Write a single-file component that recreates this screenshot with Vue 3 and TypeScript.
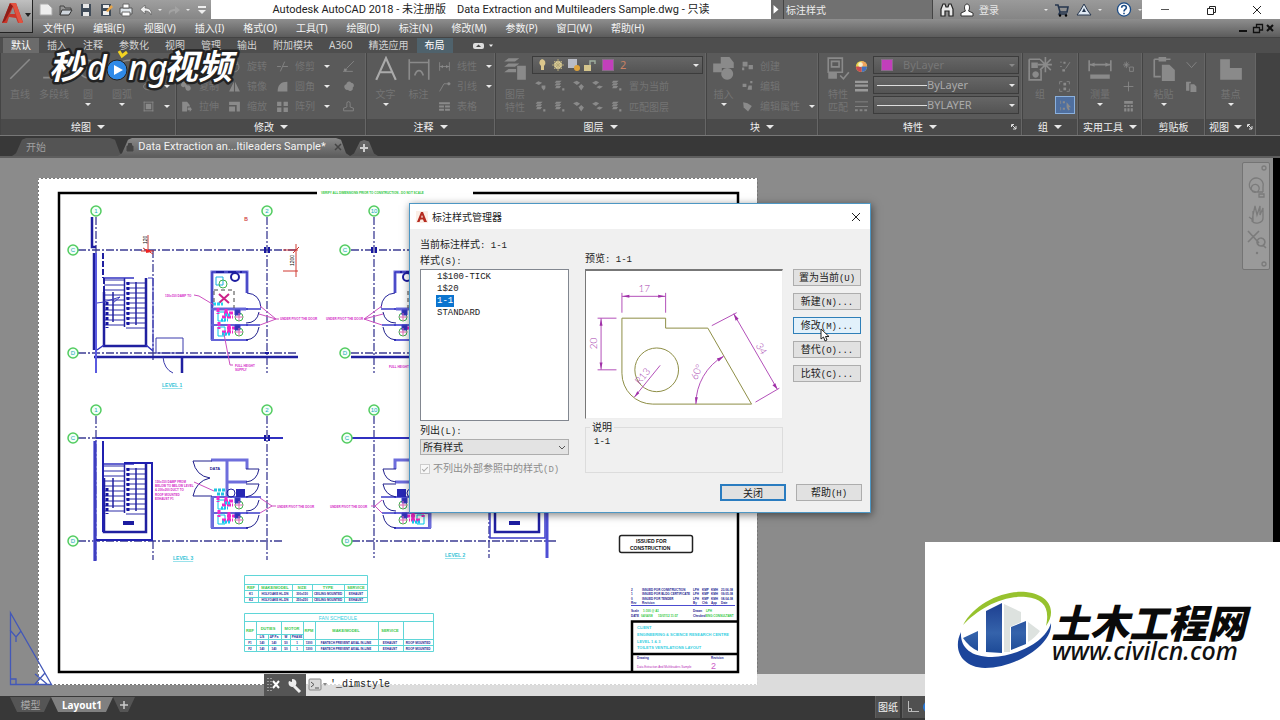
<script setup lang="ts">
import { ref } from 'vue'

interface Icon { s?: string; f?: string }
interface Tool { icon: string; label?: string; arrow?: boolean; on?: boolean }
interface Big { icon: string; lines: string[]; arrow?: boolean }
interface Panel {
  key: string
  title: string
  menu?: boolean
  launcher?: boolean
  bigs: Big[]
  cols: Tool[][]
}

const icons: Record<string, Icon> = {
  line: { s: 'M3 21L21 3' },
  pline: { s: 'M2 20H10L20 4' },
  circle: { s: 'M12 4a8 8 0 1 0 .1 0M12 12h7' },
  arc: { s: 'M3 20C5 8 12 3 21 4' },
  rect: { s: 'M4 6H20V18H4Z' },
  ellipse: { s: 'M12 6c12 0 12 12 0 12s-12-12 0-12' },
  hatch: { s: 'M3 4H21M3 20H21M4 3V21M20 3V21', f: 'M7 7h10v10H7z' },
  move: { s: 'M12 3V21M3 12H21M9 6l3-3 3 3M9 18l3 3 3-3' },
  copy: { f: 'M3 6a4 4 0 1 1 8 2l3 2a5 5 0 1 1-3 8l-2-6a4 4 0 0 1-6-6z' },
  stretch: { f: 'M4 3h9l5 6v3h-5v9H4zM14 14h4v-2l4 5-4 5v-3h-4z' },
  rotate: { s: 'M7 5a9 9 0 1 0 11 2M18 3v5h-5' },
  mirror: { f: 'M11 3v18H2zM13 3l9 18h-9z' },
  scale: { f: 'M2 3h20v18h-6V9H2zM2 12h11v9H2z' },
  trim: { s: 'M2 12H9M13 12H22M8 21L16 3' },
  fillet: { f: 'M3 21C3 9 9 3 21 3v18z' },
  array: { f: 'M2 3h8v8H2zM14 3h8v8h-8zM2 14h8v8H2zM14 14h8v8h-8z' },
  erase: { s: 'M8 16L22 2M2 21H20', f: 'M5 15l5 3-4 3-3-2z' },
  explode: { f: 'M8 8a5 5 0 0 1 9-3 5 5 0 0 1 3 9 5 5 0 0 1-9 4 5 5 0 1 1-3-10z' },
  offset: { s: 'M3 20H21V15L15 13V6a3 3 0 0 0-6 0V13L3 15Z' },
  text: { s: 'M3 22L12 2L21 22M6.500 15H17.500' },
  dim: { s: 'M3 3V22M21 3V22M3 6H21M8 18c2-6 6-6 8 0' },
  linear: { s: 'M3 4V20M21 4V20M3 12H21', f: 'M4 12l5-3v6zM20 12l-5-3v6z' },
  leader: { s: 'M3 21L11 7H17', f: 'M20 4a3 3 0 1 1-.1 0z' },
  table: { f: 'M2 4h20v4H2zM2 10h9v4H2zM13 10h9v4h-9zM2 16h9v4H2zM13 16h9v4h-9z' },
  layers: { f: 'M6 2h10l-4 3H2zM6 7h10l-4 3H2zM6 12h7v3H2zM14 9h8v13h-8z' },
  layer1: { f: 'M2 8l6-4 7 3-6 4zM14 12h7v5l-3 4-4-5z' },
  layer2: { f: 'M6 3h10l-4 4H3zM6 8h9l-3 4H3zM6 13h9l-3 4H4zM17 17h4v4h-4z' },
  layer3: { f: 'M2 6l7-3 6 4-6 4zM12 14l5-5 5 5-5 7z' },
  layer4: { f: 'M2 7l7-4 6 3-6 5zM10 15l5-3 7 2-6 4z' },
  insert: { f: 'M9 1h8l4 5v5H9zM2 7h8v8H2zM15 11a5.500 5.500 0 1 1-.1 0z' },
  create: { f: 'M3 3h9v9H3zM14 9h8v8h-8zM2 14h4v5H2z' },
  editb: { f: 'M3 7h7v6H3zM14 10h6v8h-8zM17 2h4v4h-4z' },
  attr: { f: 'M4 4l8 2 8 5-7 10L5 14z' },
  match: { s: 'M3 2H16V15H3ZM6 5H13V10H6ZM14 18l3 3 5-6', f: 'M3 15h8v6H3z' },
  group: { s: 'M2 3H12M2 3V22H13V13M17 1V15M10 8H23M12 3l10 10M22 3L12 13', f: 'M4 6h6v5H4zM8 14a3 3 0 1 1-.1 0z' },
  ungroup: { s: 'M4 4h3M14 16L22 4M4 12h3', f: 'M8 17h5v4H8zM10 3h4v4h-4z' },
  gedit: { s: 'M3 3h5M16 3h5M3 21h5M16 21h5M3 3v5M21 3v5M3 16v5M21 16v5', f: 'M10 5h5v5h-5zM10 14h5v5h-5z' },
  gsel: { s: 'M3 3v6M3 15v6', f: 'M7 4h4v4H7zM7 16h4v4H7zM14 6l8 9h-4l2 5-3 1-3-6z' },
  measure: { s: 'M2 4V14M22 4V14M2 8H22', f: 'M3 17h18v4H3zM3 8l4-2v4zM21 8l-4-2v4z' },
  qselect: { s: 'M8 3v12M2 9h12M4 5l8 8M12 5l-8 8M14 13h7v8h-7z' },
  point: { s: 'M12 3V21M3 12H21' },
  calc: { f: 'M4 2h16v5H4zM4 9h4v4H4zM10 9h4v4h-4zM16 9h4v4h-4zM4 15h4v6H4zM10 15h4v6h-4zM16 15h4v6h-4z' },
  paste: { s: 'M3 3H18M3 3V19H9', f: 'M7 1h7v4H7zM10 8h7l5 5v10H10z' },
  cut: { s: 'M3 4L12 14L21 4' },
  copyclip: { f: 'M2 3h9v3H8v14H2zM10 8h7l4 4v10H10z' },
  base: { f: 'M2 3h9v8h11v11H2z' },
}

const panels: Panel[] = [
  {
    key: 'draw', title: '绘图', menu: true,
    bigs: [
      { icon: 'line', lines: ['直线'] }, { icon: 'pline', lines: ['多段线'] },
      { icon: 'circle', lines: ['圆'], arrow: true }, { icon: 'arc', lines: ['圆弧'], arrow: true },
    ],
    cols: [[{ icon: 'rect', arrow: true }, { icon: 'ellipse', arrow: true }, { icon: 'hatch', arrow: true }]],
  },
  {
    key: 'modify', title: '修改', menu: true, bigs: [],
    cols: [
      [{ icon: 'move' }, { icon: 'copy', label: '复制' }, { icon: 'stretch', label: '拉伸' }],
      [{ icon: 'rotate', label: '旋转' }, { icon: 'mirror', label: '镜像' }, { icon: 'scale', label: '缩放' }],
      [{ icon: 'trim', label: '修剪', arrow: true }, { icon: 'fillet', label: '圆角', arrow: true }, { icon: 'array', label: '阵列', arrow: true }],
      [{ icon: 'erase' }, { icon: 'explode' }, { icon: 'offset' }],
    ],
  },
  {
    key: 'annot', title: '注释', menu: true,
    bigs: [{ icon: 'text', lines: ['文字'], arrow: true }, { icon: 'dim', lines: ['标注'] }],
    cols: [[{ icon: 'linear', label: '线性', arrow: true }, { icon: 'leader', label: '引线', arrow: true }, { icon: 'table', label: '表格' }]],
  },
  { key: 'layer', title: '图层', menu: true, bigs: [{ icon: 'layers', lines: ['图层', '特性'] }], cols: [] },
  {
    key: 'block', title: '块', menu: true,
    bigs: [{ icon: 'insert', lines: ['插入'], arrow: true }],
    cols: [[{ icon: 'create', label: '创建' }, { icon: 'editb', label: '编辑' }, { icon: 'attr', label: '编辑属性', arrow: true }]],
  },
  { key: 'props', title: '特性', menu: true, launcher: true, bigs: [{ icon: 'match', lines: ['特性', '匹配'] }], cols: [] },
  {
    key: 'group', title: '组', menu: true,
    bigs: [{ icon: 'group', lines: ['组'] }],
    cols: [[{ icon: 'ungroup' }, { icon: 'gedit' }, { icon: 'gsel', on: true }]],
  },
  {
    key: 'util', title: '实用工具', menu: true,
    bigs: [{ icon: 'measure', lines: ['测量'], arrow: true }],
    cols: [[{ icon: 'qselect' }, { icon: 'point' }, { icon: 'calc' }]],
  },
  {
    key: 'clip', title: '剪贴板',
    bigs: [{ icon: 'paste', lines: ['粘贴'], arrow: true }],
    cols: [[{ icon: 'cut' }, { icon: 'copyclip' }]],
  },
  { key: 'view', title: '视图', menu: true, launcher: true, bigs: [{ icon: 'base', lines: ['基点'], arrow: true }], cols: [] },
]

const layerRows = [
  { icons: ['layer1', 'layer2', 'layer3', 'layer4', 'layer2'], label: '置为当前' },
  { icons: ['layer2', 'layer2', 'layer3', 'layer4', 'layer2'], label: '匹配图层' },
]

const menus = ['文件(F)', '编辑(E)', '视图(V)', '插入(I)', '格式(O)', '工具(T)', '绘图(D)', '标注(N)', '修改(M)', '参数(P)', '窗口(W)', '帮助(H)']
const tabs = ['默认', '插入', '注释', '参数化', '视图', '管理', '输出', '附加模块', 'A360', '精选应用', '布局']

const styles = ['1$100-TICK', '1$20', '1-1', 'STANDARD']
const current = ref('1-1')
const actions = [
  { t: '置为当前', k: '(U)' }, { t: '新建', k: '(N)...' }, { t: '修改', k: '(M)...', hot: true },
  { t: '替代', k: '(O)...' }, { t: '比较', k: '(C)...' },
]

const bubbles = [
  [96, 211, '1'], [267, 211, '2'], [374, 211, '10'], [73, 250, 'C'], [73, 353, 'D'], [345, 250, 'C'], [345, 353, 'D'],
  [96, 410, '1'], [267, 410, '2'], [374, 410, '10'], [73, 438, 'C'], [73, 541, 'D'], [347, 438, 'C'], [347, 541, 'D'],
] as [number, number, string][]

const treads = Array.from({ length: 10 }, (_, i) => i * 5)

const cells = [
  [251, 589, 'REF', 'g'], [275, 589, 'MAKE/MODEL', 'g'], [302, 589, 'SIZE', 'g'], [328, 589, 'TYPE', 'g'], [356, 589, 'SERVICE', 'g'],
  [251, 595, 'K1', 'n'], [275, 595, 'HOLYOAKE HL-DN', 'n'], [302, 595, '300x150', 'n'], [328, 595, 'CEILING MOUNTED', 'n'], [356, 595, 'EXHAUST', 'n'],
  [251, 601, 'K2', 'n'], [275, 601, 'HOLYOAKE HL-DN', 'n'], [302, 601, '250x250', 'n'], [328, 601, 'CEILING MOUNTED', 'n'], [356, 601, 'EXHAUST', 'n'],
  [250, 632, 'REF', 'g'], [268, 630, 'DUTIES', 'g'], [292, 630, 'MOTOR', 'g'], [309, 632, 'RPM', 'g'], [346, 632, 'MAKE/MODEL', 'g'], [390, 632, 'SERVICE', 'g'],
  [262, 638, 'L/S', 'n'], [274, 638, 'ΔP Pa', 'n'], [286, 638, 'W', 'n'], [297, 638, 'PHASE', 'n'],
  [250, 644, 'F1', 'n'], [262, 644, '140', 'n'], [274, 644, '140', 'n'], [286, 644, '50', 'n'], [297, 644, '1', 'n'], [309, 644, '1300', 'n'],
  [346, 644, 'FANTECH PREVENT AXIAL IN-LINE', 'n'], [390, 644, 'EXHAUST', 'n'], [418, 644, 'ROOF MOUNTED', 'n'],
  [250, 650, 'F2', 'n'], [262, 650, '140', 'n'], [274, 650, '140', 'n'], [286, 650, '50', 'n'], [297, 650, '1', 'n'], [309, 650, '1300', 'n'],
  [346, 650, 'FANTECH PREVENT AXIAL IN-LINE', 'n'], [390, 650, 'EXHAUST', 'n'], [418, 650, 'ROOF MOUNTED', 'n'],
] as [number, number, string, string][]

const revisions = [
  { y: 591, v: ['2', 'ISSUED FOR CONSTRUCTION', 'LPH', 'KMP', 'KMH', '23-06-08'] },
  { y: 595, v: ['1', 'ISSUED FOR BLDG CERTIFICATE', 'LPH', 'KMP', 'KMH', '09-05-08'] },
  { y: 600, v: ['0', 'ISSUED FOR TENDER', 'LPH', 'KMP', 'KMH', '08-04-08'] },
  { y: 604, v: ['Rev', 'Revision', 'By', 'Chk', 'App', 'Date'] },
]
const revisionX = [631, 642, 693, 702, 711, 721]
</script>

<template>
  <div class="app">
    <header class="head">
      <button class="appbtn" aria-label="应用程序菜单">
        <svg width="33" height="32" viewBox="0 0 33 32">
          <path d="M2 23L10 3H16L23 22L18 23L16 18L9 17L7 23Z" fill="#c9362a" />
          <path d="M10 14L13 7L15 14Z" fill="#8f8f8f" />
          <path d="M10 3L2 23L5 21L13 6Z" fill="#8f1d18" />
          <path d="M13 6L19 23H23L16 3H10Z" fill="#e2523f" />
          <path d="M25 13H31L28 17Z" fill="#222" />
        </svg>
      </button>
      <div class="headmain">
        <div class="titlebar">
          <div class="quick">
            <button aria-label="新建"><svg viewBox="0 0 14 14"><path d="M1 1H9L13 5V12H1Z" fill="#eee" stroke="#aaa" /></svg></button>
            <button aria-label="打开"><svg viewBox="0 0 14 14"><path d="M1 12V3H5L6 5H12V7" fill="none" stroke="#444" /><path d="M3 7H13L10 12H1Z" fill="#cfd6dd" stroke="#333" /></svg></button>
            <button aria-label="保存"><svg viewBox="0 0 14 14"><path d="M2 1H12V13H2Z" fill="#3f4b58" /><path d="M4 1H10V5H4ZM4 9H10V13H4Z" fill="#e8e8e8" /></svg></button>
            <button aria-label="另存为"><svg viewBox="0 0 14 14"><path d="M2 1H12V13H2Z" fill="#3f4b58" /><path d="M4 2H10V5H4ZM4 8H10V12H4Z" fill="#eee" /><path d="M7 8L12 2L14 4L9 9Z" fill="#e9a648" /></svg></button>
            <button aria-label="打印"><svg viewBox="0 0 14 14"><path d="M1 5H13V11H1Z" fill="#dfe5ea" stroke="#555" /><path d="M4 1H10V5H4ZM3 9H11V13H3Z" fill="#fff" stroke="#666" /></svg></button>
            <button aria-label="放弃"><svg viewBox="0 0 14 14"><path d="M6 2V5C11 5 13 8 12 12C11 9 9 8 6 8V11L1 6.500Z" fill="#eee" stroke="#555" stroke-width=".6" /></svg></button>
            <i class="dn sm"></i>
            <button aria-label="重做"><svg viewBox="0 0 14 14"><path d="M8 3V6C3 6 1 8 2 12C3 9 5 8 8 8V11L13 7Z" fill="#a3a3a3" /></svg></button>
            <i class="dn sm"></i>
            <button class="nar" aria-label="自定义"><svg viewBox="0 0 14 14"><path d="M3 3H11V5H3ZM3 7H11L7 11Z" fill="#eee" /></svg></button>
          </div>
          <div class="doctitle"><span>Autodesk AutoCAD 2018 - 未注册版</span><span>Data Extraction and Multileaders Sample.dwg - 只读</span></div>
          <div class="info">
            <button class="exp" aria-label="展开"><svg width="8" height="10" viewBox="0 0 8 10"><path d="M2 1V8L6 4.500Z" fill="#fff" /></svg></button>
            <input class="search" aria-label="搜索" value="标注样式">
            <button aria-label="查找"><svg viewBox="0 0 16 14"><path d="M2 13V6L4 1H6L7 4H9L10 1H12L14 6V13H10V8H6V13Z" fill="#e8e8e8" stroke="#222" stroke-width="1.200" /></svg></button>
            <button class="login"><svg viewBox="0 0 16 14"><path d="M8 1C11 1 11 6 9.500 8L14 10V13H2V10L6.500 8C5 6 5 1 8 1Z" fill="#fff" stroke="#333" /></svg>登录</button>
            <i class="dn sm"></i>
            <button aria-label="商店"><svg viewBox="0 0 16 14"><path d="M1 2H4L6 9H13L14 4H5M6 9L5 11H13" fill="none" stroke="#26364e" stroke-width="1.600" /><circle cx="6" cy="12.500" r="1.200" /><circle cx="12" cy="12.500" r="1.200" /></svg></button>
            <button aria-label="应用"><svg viewBox="0 0 16 14"><path d="M8 1L12 8L15 12H1L4 8Z" fill="#dfe8f2" stroke="#26364e" /><path d="M8 5L10 9H6Z" fill="#26364e" /></svg></button>
            <i class="dn sm"></i>
            <button class="help" aria-label="帮助"><svg viewBox="0 0 16 16"><circle cx="8" cy="8" r="7" fill="#fff" stroke="#1c4c86" stroke-width="1.400" /><path d="M5.500 6C5.500 3 10.500 3 10.500 6C10.500 8 8 7.800 8 10M8 11.500V13" fill="none" stroke="#1c4c86" stroke-width="1.700" /></svg></button>
            <i class="dn sm"></i>
          </div>
          <div class="win">
            <button aria-label="最小化"><svg viewBox="0 0 12 12"><path d="M2 5.500H10" stroke="#555" /></svg></button>
            <button aria-label="还原"><svg viewBox="0 0 12 12"><path d="M2.500 4.500H8.500V10.500H2.500ZM4.500 4V2.500H10.500V8.500H9" fill="none" stroke="#222" /></svg></button>
            <button aria-label="关闭窗口"><svg viewBox="0 0 12 12"><path d="M2 2L10 10M10 2L2 10" stroke="#222" /></svg></button>
          </div>
        </div>
        <nav class="menubar">
          <button v-for="m in menus" :key="m">{{ m }}</button>
          <svg class="mdi" width="38" height="12" viewBox="0 0 38 12"><path d="M1 9H9" stroke="#111" stroke-width="2" /><path d="M15.500 5.500H21.500V10.500H15.500ZM18.500 5V2.500H24.500V8H22" fill="none" stroke="#111" stroke-width="1.300" /><path d="M29 3L35 9M35 3L29 9" stroke="#111" stroke-width="2" /></svg>
        </nav>
      </div>
    </header>

    <nav class="tabs">
      <button v-for="(t, i) in tabs" :key="t" :class="{ active: i === 0, ctx: i === 10 }">{{ t }}</button>
      <button class="min" aria-label="最小化功能区"><svg width="22" height="8" viewBox="0 0 22 8"><rect x="0" y="1" width="11" height="6" rx="2" fill="#ddd" /><path d="M3 5H8L5.500 2.500Z" fill="#444" /><path d="M16 2.500H20L18 5Z" fill="#eee" /></svg></button>
    </nav>

    <section class="ribbon">
      <div v-for="p in panels" :key="p.key" class="panel" :class="p.key">
        <div class="pbody">
          <button v-for="b in p.bigs" :key="b.icon" class="big" :class="{ lit: b.icon === 'text' }">
            <svg viewBox="0 0 24 24"><path v-if="icons[b.icon].s" :d="icons[b.icon].s" class="st" /><path v-if="icons[b.icon].f" :d="icons[b.icon].f" class="fi" /></svg>
            <span v-for="l in b.lines" :key="l">{{ l }}</span>
            <i v-if="b.arrow" class="dn"></i>
          </button>
          <div v-for="(c, ci) in p.cols" :key="ci" class="col">
            <button v-for="t in c" :key="t.icon" class="tool" :class="{ on: t.on }" :aria-label="t.label || t.icon">
              <svg viewBox="0 0 24 24"><path v-if="icons[t.icon].s" :d="icons[t.icon].s" class="st" /><path v-if="icons[t.icon].f" :d="icons[t.icon].f" class="fi" /></svg>
              <span v-if="t.label">{{ t.label }}</span>
              <i v-if="t.arrow" class="dn"></i>
            </button>
          </div>

          <div v-if="p.key === 'layer'" class="stack">
            <div class="combo lay">
              <svg width="70" height="16" viewBox="0 0 70 16">
                <path d="M6 2a4 4 0 0 1 2 7v4H5V9a4 4 0 0 1 1-7z" fill="#dcc78c" />
                <circle cx="22" cy="8" r="4" fill="#dccf9a" /><path d="M22 2V14M16 8H28M18 4L26 12M26 4L18 12" stroke="#b5a878" />
                <path d="M32 2H41V11H32Z" fill="#b9bcc6" /><circle cx="41" cy="11" r="3" fill="#dfa33c" />
                <path d="M48 8H55V14H48Z" fill="#d5c58c" /><path d="M54 8V4H59V7" fill="none" stroke="#9fae9f" stroke-width="1.400" />
              </svg>
              <b class="sw"></b>
              <select class="red" aria-label="图层"><option>2</option></select><i class="dn"></i>
            </div>
            <div v-for="r in layerRows" :key="r.label" class="lrow">
              <button v-for="(n, i) in r.icons" :key="i" aria-label="图层工具"><svg viewBox="0 0 24 24"><path :d="icons[n].f" class="fi" /></svg></button>
              <span>{{ r.label }}</span>
            </div>
          </div>

          <template v-if="p.key === 'props'">
            <div class="picons">
              <svg viewBox="0 0 14 14"><circle cx="7" cy="7" r="6" fill="#e8d34a" /><path d="M7 7L7 1A6 6 0 0 1 13 7Z" fill="#f0a45c" /><path d="M7 7H13A6 6 0 0 1 7 13Z" fill="#4470c0" /><path d="M7 7V13A6 6 0 0 1 1 7Z" fill="#c84a52" /><circle cx="6" cy="5" r="2.500" fill="#fff" opacity=".7" /></svg>
              <svg viewBox="0 0 14 14"><path d="M0 2H14M0 6H14M0 11H14" stroke="#9a9a9a" stroke-width="2.500" /></svg>
              <svg viewBox="0 0 14 14"><path d="M0 2H14M0 7H14" stroke="#858585" /><path d="M0 11H14" stroke="#858585" stroke-width="2" stroke-dasharray="3 2" /></svg>
            </div>
            <div class="stack">
              <div class="combo off"><b class="sw"></b><select aria-label="颜色"><option>ByLayer</option></select><i class="dn"></i></div>
              <div class="combo"><u></u><select aria-label="线宽"><option>ByLayer</option></select><i class="dn"></i></div>
              <div class="combo"><u></u><select aria-label="线型"><option>BYLAYER</option></select><i class="dn"></i></div>
            </div>
          </template>
        </div>
        <div class="cap">{{ p.title }}<i v-if="p.menu" class="dn lg"></i><svg v-if="p.launcher" class="launch" width="6" height="6" viewBox="0 0 6 6"><path d="M1 1L5 5M5 2V5H2M0.500 3V0.500H3" fill="none" stroke="#ddd" /></svg></div>
      </div>

      <svg class="watermark" width="210" height="66" viewBox="40 36 210 66" role="img" aria-label="秒dong视频">
        <g class="wm">
          <text x="49" y="79" class="cjk">秒</text><text x="87" y="80">d</text><text x="128" y="80">ng</text><text x="164" y="79" class="cjk">视频</text>
        </g>
        <circle cx="117" cy="70" r="10" fill="#2f8ae8" stroke="#222" stroke-width="1" />
        <path d="M114 65V75L123 70Z" fill="#fff" />
        <path d="M119 51L122 56L127 52" fill="none" stroke="#f3d321" stroke-width="3" />
      </svg>
    </section>

    <nav class="files">
      <button class="ftab start">开始</button>
      <button class="ftab doc"><svg width="8" height="10" viewBox="0 0 8 10"><path d="M1 4H7V9H1ZM2.500 4V1.500H5.500V4" fill="#444" stroke="#444" /></svg><span>Data Extraction an...ltileaders Sample*</span><svg width="8" height="8" viewBox="0 0 8 8"><path d="M1 1L7 7M7 1L1 7" stroke="#444" stroke-width="1.500" /></svg></button>
      <button class="ftab plus" aria-label="新图形"><svg width="10" height="10" viewBox="0 0 10 10"><path d="M5 1V9M1 5H9" stroke="#ccc" stroke-width="2" /></svg></button>
    </nav>

    <main class="canvas">
      <svg class="sheet" width="925" height="538" viewBox="0 158 925 538">
        <defs>
          <g id="stalls" fill="none" stroke="#3c3cc8">
            <path d="M211 309H248M211 325H248M211 340H248M213 309V340" stroke-width="2" stroke="#6464d8" />
            <path d="M246 309h15M246 325h14M246 340h2" stroke-width="1.500" />
            <path d="M259 312Q257 323 246 323M259 327Q257 339 246 340" stroke="#20208c" />
            <path d="M218 312h7v9h-7zM218 327h7v9h-7z" stroke="#00c8e8" />
            <path d="M218 308v6M224 313h9M226 309v7M219 322v7M227 328h8M229 324v7M222 317h11M222 332h11" stroke="#f028c8" stroke-width="3" stroke-dasharray="4 1" />
            <path d="M221 320h7M222 334h9M225 315h6" stroke="#14c8f0" stroke-width="3" stroke-dasharray="2 1" />
            <circle cx="239" cy="317" r="4" stroke="#3cb44c" /><circle cx="239" cy="332" r="4" stroke="#3cb44c" />
            <path d="M235 310h5v5h-5zM235 325h5v5h-5z" fill="#3232b4" />
            <path d="M239 313v8M235 317h8M239 328v8M235 332h8" stroke="#e066b4" />
          </g>
          <g id="room1">
            <path d="M212 340V272H247V293M214 309H246" fill="none" stroke="#6e6edc" stroke-width="3" />
            <path d="M212 340V272H247V293" fill="none" stroke="#2828b4" stroke-width="1" />
            <path d="M247 293Q260 294 261 308" fill="none" stroke="#24249a" />
            <path d="M216 272H242" stroke="#1e1ea0" stroke-width="2" stroke-dasharray="8 4" />
            <circle cx="235" cy="277" r="4" fill="none" stroke="#1e1ea0" stroke-width="2" />
            <path d="M214 290H234V308M214 302V290" fill="none" stroke="#444" stroke-dasharray="4 3" />
            <path d="M216 277h7v8h-7z" fill="none" stroke="#18aee0" /><circle cx="223" cy="284" r="4" fill="none" stroke="#3cb44c" />
            <path d="M219 294L229 303M229 294L219 303" stroke="#cc2288" stroke-width="2" />
            <path d="M213 304h10" stroke="#20d4f0" stroke-width="3" stroke-dasharray="3 1" />
            <use href="#stalls" />
          </g>
          <g id="room2">
            <use href="#stalls" y="188" />
            <path d="M212 528V497M211 460H247V469M227 460V497M227 482H247" fill="none" stroke="#6e6edc" stroke-width="3" />
            <path d="M259 469Q257 481 246 482M246 469H259M246 484H259Q257 495 246 497" fill="none" stroke="#20208c" />
            <circle cx="231" cy="493" r="4" fill="none" stroke="#1e1ea0" /><path d="M236 489h9v8h-9z" fill="#2828b4" />
            <path d="M214 490h11M217 494h7" stroke="#20c4e0" stroke-width="3" stroke-dasharray="3 1" />
          </g>
        </defs>
        <rect x="38" y="178" width="719" height="507" fill="#fff" />
        <path d="M38.500 684V178.500H757.500V684.500H38" fill="none" stroke="#777" stroke-dasharray="2 2" />
        <path d="M317 193H59V672H738V193H473" fill="none" stroke="#000" stroke-width="2.500" />
        <text x="321" y="194" class="t3 green bd">VERIFY ALL DIMENSIONS PRIOR TO CONSTRUCTION - DO NOT SCALE</text>

        <g class="grid">
          <path d="M96 217V373M267 217V373M374 217V373M78 250H298M78 353H298M351 250H410M351 353H410M153 250V360" />
          <path d="M96 416V560M267 416V560M374 416V558M78 438H283M78 541H283M352 438H410M352 541H558M153 541V560M489 512V558" />
        </g>
        <path d="M94 357H298M351 357H410M94 253V350M92 217V247H96M182 357V373" fill="none" stroke="#2020a0" stroke-width="2.500" />
        <path d="M96 253V373" stroke="#5a5ae0" stroke-width="2" />
        <path d="M156 338H183V353M156 338V353H183M163 357Q164 369 173 373" fill="none" stroke="#3a3aac" />
        <path d="M96 438H283M352 438H410" stroke="#3030c0" stroke-width="2" />
        <path d="M95 441V561" stroke="#6262dc" stroke-width="3.500" />
        <path d="M95 441V561" stroke="#1c1ca0" />

        <g v-for="dy in [0, 186]" :key="dy" :transform="`translate(0 ${dy})`">
          <path v-for="t in treads" :key="t" :d="`M104 ${280 + t}H124M126 ${283 + t}H147`" stroke="#2c2ca8" />
          <path d="M107 302V328" stroke="#1414a0" stroke-width="3" stroke-dasharray="3 2" />
          <path d="M128 282V327" stroke="#1414a0" stroke-width="3" stroke-dasharray="3 2" />
          <path d="M124.500 278V327M136 282V325M113 292V322" stroke="#2020a0" stroke-width="1.500" />
          <path d="M104 292V346H146V278" fill="none" stroke="#2020a0" stroke-width="2.500" />
          <path d="M104 278H134" fill="none" stroke="#3232c0" stroke-width="1.500" />
        </g>
        <path d="M97 350L104 345M153 351L146 345" stroke="#3232c0" stroke-width="1.500" />
        <path d="M103 253V278M104 292V278" stroke="#2020a0" stroke-width="2" stroke-dasharray="6 2" />
        <path d="M97 303L104 302L120 297L113 303M148 278H153V350" fill="none" stroke="#4040c0" />
        <path d="M103 441V532M124 463H152V540H96" fill="none" stroke="#2020b0" stroke-width="2" />
        <rect x="123" y="521" width="11" height="4" fill="#1c1ca0" />

        <use href="#room1" /><use href="#room1" transform="translate(642 0) scale(-1 1)" />
        <use href="#room2" /><use href="#room2" transform="translate(642 0) scale(-1 1)" />
        <path d="M193 461H212M193 496H212M193 461Q196 476 210 478Q196 481 193 496" fill="none" stroke="#20208c" />
        <text x="215" y="470" class="t4 navy mid bd">DATA</text>
        <path d="M265 247v6M269 247v6M265 353h4M372 247v6M376 247v6M265 435v6M269 435v6" stroke="#1818a0" stroke-width="2" />

        <path d="M148 235V253M141 251H154M143 248L153 254M296 244V277M283 250H298M283 271H298M293 253L299 247" fill="none" stroke="#d03830" />
        <path d="M146 249L152 251L146 253Z" fill="#f02020" />
        <text transform="translate(147 244) rotate(-90)" class="t5">120</text>
        <text transform="translate(294 266) rotate(-90)" class="t5">1200</text>
        <text x="246" y="221" class="t5 redt mid">B</text>

        <g class="mag">
          <path d="M194 295L199 296L214 305M260 306L276 319L259 314M276 319L260 325M276 319H279M224 334L230 365H233M364 319L382 306M364 319L383 314M364 319L382 325" />
          <path d="M194 482L214 491M260 498L272 506H276M272 506L260 513M382 500L375 506H371M375 506L382 513" />
        </g>
        <text x="165" y="297" class="t3 m">150x150 DAMP TO</text>
        <text x="280" y="320" class="t3 m">UNDER PIVOT THE DOOR</text>
        <text x="326" y="320" class="t3 m">UNDER PIVOT THE DOOR</text>
        <text x="235" y="367" class="t3 m">FULL HEIGHT</text><text x="235" y="371" class="t3 m">SUPPLY</text>
        <text x="389" y="368" class="t3 m">FULL HEIGHT</text>
        <text x="277" y="508" class="t3 m">UNDER PIVOT THE DOOR</text>
        <text x="330" y="508" class="t3 m">UNDER PIVOT THE DOOR</text>
        <text class="t3 m"><tspan x="155" y="483">150x150 DAMP FROM</tspan><tspan x="155" y="487">BELOW TO BELOW LEVEL</tspan><tspan x="155" y="491">&amp; 200x200 DUCT TO</tspan><tspan x="155" y="496">ROOF MOUNTED</tspan><tspan x="155" y="500">EXHAUST F1</tspan></text>
        <text x="162" y="387" class="lvl">LEVEL 1</text><text x="173" y="560" class="lvl">LEVEL 3</text><text x="445" y="557" class="lvl">LEVEL 2</text>

        <g v-for="b in bubbles" :key="`${b[0]}-${b[1]}`"><circle :cx="b[0]" :cy="b[1]" r="5" fill="#f2fff6" stroke="#52cc60" stroke-width="1.500" /><text :x="b[0]" :y="b[1] + 2" class="bub">{{ b[2] }}</text></g>

        <path d="M495 512V532H539V512" fill="none" stroke="#2020a0" stroke-width="2.500" /><path d="M490 512V538H545V512" fill="none" stroke="#3c3cc8" stroke-width="1.500" />
        <path d="M547 512V558" stroke="#4e4ed4" stroke-width="3" /><rect x="509" y="521" width="11" height="4" fill="#1c1ca0" />

        <path d="M244.500 575.500H367.500V602.500H244.500ZM244 584.500H367M244 590.500H367M244 597.500H367M258.500 584V602M292.500 584V602M312.500 584V602M344.500 584V602" class="tb" />
        <path d="M244.500 613.500H433.500V651.500H244.500ZM244 621.500H433M256 634.500H303M244 639.500H433M244 645.500H433M256.500 621V651M281.500 621V651M303.500 621V651M315.500 621V651M378.500 621V651M403.500 621V651M268.500 634V651M290.500 634V651" class="tb" />
        <text x="338" y="620" class="t5 cy mid">FAN SCHEDULE</text>
        <text v-for="(c, i) in cells" :key="i" :x="c[0]" :y="c[1]" class="mid" :class="c[3] === 'g' ? 'hd' : 't3 navy bd'">{{ c[2] }}</text>

        <rect x="619.500" y="535.500" width="73" height="17" rx="2" fill="none" stroke="#222" stroke-width="1.500" />
        <text x="636" y="543" class="stamp">ISSUED FOR</text><text x="630" y="550" class="stamp">CONSTRUCTION</text>

        <g v-for="r in revisions" :key="r.y" class="t3 navy bd"><text v-for="(s, i) in r.v" :key="i" :x="revisionX[i]" :y="r.y">{{ s }}</text></g>
        <g class="t3 navy bd">
          <text x="631" y="612">Scale</text><text x="693" y="612">Drawn</text><text x="631" y="617">DATE</text><text x="693" y="617">Checked</text>
          <text x="637" y="659">Drawing</text><text x="711" y="659">Revision</text>
        </g>
        <path d="M631 605.500H735" stroke="#4c4cd0" />
        <g class="t3 green bd"><text x="643" y="612">1:100 @ A1</text><text x="706" y="612">LPH</text><text x="641" y="617">04/04/08</text><text x="658" y="617">15/07/12 11:57</text><text x="706" y="617">ENG CONSULTANT</text></g>
        <path d="M632 672V621.500H738M632 654H738" fill="none" stroke="#000" stroke-width="2.500" />
        <g class="t4 cy bd"><text x="637" y="629">CLIENT</text><text x="637" y="636">ENGINEERING &amp; SCIENCE RESEARCH CENTRE</text><text x="637" y="643">LEVEL 1 &amp; 3</text><text x="637" y="649">TOILETS VENTILATIONS LAYOUT</text></g>
        <text x="637" y="668" class="t3 m hl">Data Extraction And Multileaders Sample</text><text x="711" y="669" class="two">2</text>

        <path d="M10.500 613V684.500H51.500ZM10 679H16V684M10 630L16 637L21 631M16 637V642M35 674L47 684M35 684L45 673" fill="none" stroke="#4358b8" stroke-width="1.300" />
      </svg>

      <div class="navbar">
        <svg width="26" height="106" viewBox="0 0 26 106"><g fill="none" stroke="#7b7b7b" stroke-width="1.300"><circle cx="21" cy="5" r="2" /><path d="M20 29H13A7 7 0 1 1 20 24V29M16 24A4 4 0 1 1 9 23A4 4 0 0 1 16 24M16 31h5v3h-5z" /><path d="M6 54L10 57V48M10 52L12 43L14 52L17 43V52L20 45V55C20 60 12 62 9 58Z" /><path d="M5 68L16 80M16 68L5 79M18 75A4 4 0 1 1 17.900 75M20 82L23 85" stroke-width="1.600" /><circle cx="21" cy="101" r="2" /></g><circle cx="14" cy="90" r="1.200" fill="#7b7b7b" /></svg>
      </div>

      <form class="cmd" @submit.prevent>
        <div class="cmdl"><svg width="42" height="22" viewBox="0 0 42 22"><path d="M4 4V19M7 4V19" stroke="#999" stroke-width="2" stroke-dasharray="1 2" /><path d="M9 7L15 14M15 7L9 14" stroke="#fff" stroke-width="2" /><path d="M30 12L36 18" stroke="#eee" stroke-width="3" /><path d="M25 7L28 8L28 5A4 4 0 1 1 25 7" fill="#eee" /></svg></div>
        <svg width="22" height="14" viewBox="0 0 22 14"><rect x="1" y="1" width="12" height="11" rx="1" fill="#d8d8d8" stroke="#888" /><path d="M3 4L6 6.500L3 9M7 10H11" fill="none" stroke="#555" /><path d="M15 5H19L17 8Z" fill="#888" /></svg>
        <input aria-label="命令行" value="'_dimstyle">
      </form>

      <section class="dialog" role="dialog" aria-label="标注样式管理器">
        <div class="dtitle">
          <svg width="12" height="12" viewBox="0 0 12 12"><rect width="12" height="12" fill="#fbeee6" /><path d="M1 11L5 1H7L11 11H8L7 8.500H4.500L3.500 11ZM5 6.500H7L6 4Z" fill="#b52a1f" /></svg>
          <span>标注样式管理器</span>
          <button aria-label="关闭对话框"><svg width="10" height="10" viewBox="0 0 10 10"><path d="M1 1L9 9M9 1L1 9" stroke="#222" /></svg></button>
        </div>
        <div class="dbody">
          <div class="left">
            <p>当前标注样式<span class="mono">: 1-1</span></p>
            <p id="lst">样式<span class="mono">(S):</span></p>
            <ul role="listbox" aria-labelledby="lst">
              <li v-for="s in styles" :key="s" role="option" :aria-selected="s === current" @click="current = s"><span class="mono" :class="{ sel: s === current }">{{ s }}</span></li>
            </ul>
            <label class="ll" for="flt">列出<span class="mono">(L):</span></label>
            <div class="sel-wrap"><select id="flt"><option>所有样式</option></select><svg width="8" height="6" viewBox="0 0 8 6"><path d="M1 1L4 4L7 1" fill="none" stroke="#555" /></svg></div>
            <label class="chk"><input type="checkbox" checked disabled><span>不列出外部参照中的样式<span class="mono">(D)</span></span></label>
          </div>
          <div class="midc">
            <p>预览<span class="mono">: 1-1</span></p>
            <div class="preview">
              <svg viewBox="586 271 196 148">
                <g fill="none" stroke="#8d8d45"><path d="M621.500 318.500H665.500V328.500H708L752 405H652.500A31 31 0 0 1 621.500 374Z" /><circle cx="656.500" cy="370.500" r="22" /></g>
                <g fill="none" stroke="#b24fb8"><path d="M621.500 293V313M665.500 293V313M621.500 296.500H665.500M597 318.500H616M597 370.500H616M600.500 318.500V370.500M712 326L737 313M756 403L780 389M734 314L778 390M660 366L634 398M696 405A56 56 0 0 1 724 356.500" /></g>
                <path d="M622 296.500L629 295V298ZM665 296.500L658 295V298ZM600.500 319L599 326H602ZM600.500 370L599 363H602ZM734 314L739 319L736 321ZM778 390L773 386L776 384ZM634 398L637 392L639 394ZM696 405L695 398H698ZM724 357L717 359L719 362Z" fill="#a030a8" />
                <g class="dimt"><text x="644" y="292">17</text><text transform="translate(596 344) rotate(-90)">20</text><text transform="translate(759 351) rotate(60)">34</text><text transform="translate(700 374) rotate(-66)">60°</text><text transform="translate(645 379) rotate(-51)">R13</text></g>
              </svg>
            </div>
            <fieldset><legend>说明</legend><span class="mono">1-1</span></fieldset>
          </div>
          <div class="right">
            <button v-for="a in actions" :key="a.t" :class="{ hot: a.hot }">{{ a.t }}<span class="mono">{{ a.k }}</span></button>
          </div>
        </div>
        <div class="dfoot"><button class="def">关闭</button><button>帮助<span class="mono">(H)</span></button></div>
        <svg class="cursor" width="10" height="14" viewBox="0 0 10 14"><path d="M1 1V11L3.500 9L5 13L7 12L5.500 8.500H9Z" fill="#fff" stroke="#222" /></svg>
      </section>
    </main>

    <footer class="status">
      <button class="ltab">模型</button><button class="ltab act">Layout1</button><button class="ltab add" aria-label="新布局"><svg width="8" height="8" viewBox="0 0 8 8"><path d="M4 0V8M0 4H8" stroke="#ccc" stroke-width="1.500" /></svg></button>
      <div class="sright"><button>图纸</button><button aria-label="正交"><svg width="24" height="14" viewBox="0 0 24 14"><path d="M5.500 1V11.500H16M5 8.500H8.500V11" fill="none" stroke="#bbb" /><circle cx="26" cy="7" r="5" fill="none" stroke="#2a7ad8" stroke-width="2" /></svg></button></div>
    </footer>

    <aside class="brand">
      <svg width="355" height="178" viewBox="925 542 355 178" role="img" aria-label="土木工程网 www.civilcn.com">
        <defs><linearGradient id="bl" x1="0" y1="0" x2="0" y2="1"><stop offset="0" stop-color="#1d3f91" /><stop offset=".6" stop-color="#3563ab" /><stop offset="1" stop-color="#1d4a97" /></linearGradient></defs>
        <path d="M1004 604L1021 612V622L1010 627V652H1004ZM1028 622L1040 631Q1035 638 1028 642Z" fill="#dde2df" />
        <path d="M986 611L1002 603V653L986 652ZM963 638L978 631V651Q969 647 963 638ZM1011 627L1026 621V644L1011 650Z" fill="url(#bl)" />
        <path d="M963 625C974 604 1002 590 1026 592C1052 595 1056 613 1046 626C1050 608 1044 599 1026 597C1002 595 978 609 963 625Z" fill="#97c22e" />
        <path d="M961 632C960 647 970 657 992 657C1016 656 1045 643 1051 623C1053 645 1015 668 985 668C960 667 953 648 961 632Z" fill="#1c459b" />
        <text x="1051" y="638" class="b1">土木工程网</text><text x="1052" y="660" class="b2">www.civilcn.com</text>
      </svg>
    </aside>
  </div>
</template>

<style>
body { margin: 0; background: #383838; }
</style>

<style scoped>
* { box-sizing: border-box; }
.app { display: flex; flex-direction: column; min-height: 100vh; position: relative; overflow: hidden; font: 10px/14px "Noto Sans", "Noto Sans CJK SC", sans-serif; color: #e6e6e6; background: #383838; }
button { font: inherit; color: inherit; background: none; border: 0; padding: 0; margin: 0; cursor: default; white-space: nowrap; }
input, select { font: inherit; color: inherit; border-radius: 0; margin: 0; }
svg { display: block; flex: none; }
.dn { flex: none; width: 0; height: 0; border: 3px solid transparent; border-top-color: #e8e8e8; border-bottom: 0; }
.dn.sm { border-width: 2px; border-bottom: 0; }
.dn.lg { border-width: 4px; border-bottom: 0; }

.head { display: flex; height: 37px; background: linear-gradient(#8e8e8e 50%, #5a5a5a); }
.appbtn { width: 33px; height: 33px; background: linear-gradient(#c0c0c0, #7c7c7c); border-right: 1px solid #222; border-bottom: 1px solid #222; }
.headmain { flex: 1; display: flex; flex-direction: column; min-width: 0; }
.titlebar { display: flex; height: 19px; }
.quick { width: 178px; display: flex; align-items: center; gap: 6px; padding-left: 6px; background: linear-gradient(#9f9f9f, #868686); }
.quick svg { width: 14px; height: 14px; }
.quick .dn { margin: 0 -1px; }
.doctitle { flex: 1; background: #fff; color: #222; font: 11px/19px Roboto, "Noto Sans CJK SC", sans-serif; display: flex; justify-content: center; gap: 11px; white-space: nowrap; }
.info { width: 371px; display: flex; align-items: center; gap: 6px; background: linear-gradient(#9a9a9a, #858585); }
.info svg { width: 16px; height: 14px; }
.info .exp { width: 12px; height: 19px; background: #6d6d6d; }
.info .exp svg { width: 10px; }
.search { width: 150px; height: 19px; margin-left: -6px; border: 1px solid #444; border-width: 0 1px 0 1px; background: #717171; color: #eee; padding: 0 2px; outline: 0; }
.login { display: flex; align-items: center; gap: 4px; margin-right: auto; margin-left: -2px; }
.help { margin-left: 8px; }
.help svg { height: 15px; }
.win { width: 138px; background: #fff; display: flex; justify-content: space-around; align-items: center; }
.win svg { width: 12px; height: 12px; }
.menubar { flex: 1; display: flex; align-items: center; gap: 19px; padding: 0 4px 0 10px; color: #f4f4f4; background: linear-gradient(#8e8e8e, #5c5c5c); }
.mdi { margin-left: auto; }

.tabs { display: flex; height: 16px; padding-left: 3px; background: #4e4e4e; border-top: 1px solid #444; color: #d2d2d2; }
.tabs button { padding: 0 8px; line-height: 15px; }
.tabs .active { background: #6b6b6b; color: #fff; }
.tabs .ctx { background: #4f626c; color: #fff; }
.tabs .min { margin-left: 12px; }

.ribbon { position: relative; display: flex; height: 83px; background: #424242; border-bottom: 1px solid #777; color: #747474; }
.panel { display: flex; flex-direction: column; border-left: 1px solid #444; border-right: 1px solid #666; background: #5a5a5a; }
.pbody { flex: 1; display: flex; padding: 3px 2px 0; min-height: 0; }
.cap { position: relative; height: 16px; display: flex; align-items: center; justify-content: center; gap: 6px; background: #4a4a4a; color: #f0f0f0; }
.launch { position: absolute; right: 4px; top: 5px; }
.view .cap { gap: 5px; padding-right: 10px; }
.view .launch { right: 2px; }
.draw { width: 176px; } .modify { width: 190px; } .annot { width: 129px; } .layer { width: 211px; } .block { width: 112px; }
.props { width: 204px; } .group { width: 56px; } .util { width: 64px; } .clip { width: 63px; } .view { width: 51px; }
.st { fill: none; stroke: #8a8a8a; stroke-width: 1.5; }
.fi { fill: #8a8a8a; }
.big { width: 34px; display: flex; flex-direction: column; align-items: center; line-height: 13px; justify-content: flex-start; }
.big svg { width: 26px; height: 26px; margin-bottom: 6px; }
.big .dn { margin-top: 2px; }
.lit .st { stroke: #aaa; stroke-width: 2; }
.col { display: flex; flex-direction: column; flex: 1; }
.tool { height: 20px; display: flex; align-items: center; gap: 6px; padding-left: 3px; }
.tool svg { width: 13px; height: 13px; }
.tool .dn { margin-left: 3px; }
.modify .pbody { padding-left: 0; }
.modify .col:nth-child(3) { flex: 1 0 18px; }
.modify .col:last-child { flex: 0 0 24px; }
.group .col, .util .col, .clip .col { flex: 0 0 20px; }
.group .big { width: 32px; } .util .big, .clip .big { width: 38px; } .view .big { width: 46px; }
.tool.on { height: 18px; background: #4f6f9f; border: 1px solid #8ab0dd; }
.group .tool, .util .tool, .clip .tool { padding-left: 3px; }
.stack { flex: 1; display: flex; flex-direction: column; gap: 2px; min-width: 0; }
.combo { height: 18px; display: flex; align-items: center; gap: 4px; padding: 0 3px; border: 1px solid #3c3c3c; background: linear-gradient(#666, #545454); color: #aaa; }
.combo select { flex: 1; min-width: 0; appearance: none; background: none; border: 0; padding: 0; outline: 0; font: 11px/16px "Noto Sans", sans-serif; }
.combo u { width: 50px; height: 0; border-top: 1px solid #ddd; margin-right: -4px; }
.combo .red { color: #c98263; padding-left: 2px; }
.sw { width: 12px; height: 12px; background: #c23fbb; border: 1px solid #8a6a8a; }
.combo .sw { margin-left: 4px; }
.lay .sw { margin-left: -8px; }
.off { color: #777; }
.off select { padding-left: 6px; }
.off .dn { border-top-color: #888; }
.lrow { height: 19px; display: flex; align-items: center; gap: 6px; padding-left: 2px; }
.lrow svg { width: 13px; height: 13px; }
.picons { width: 18px; display: flex; flex-direction: column; gap: 7px; padding-top: 4px; }
.picons svg { width: 13px; height: 13px; }
.watermark { position: absolute; left: 40px; top: -17px; overflow: visible; }
.wm { font: italic 500 34px "Noto Sans", sans-serif; fill: #fff; stroke: #222; stroke-width: 5; paint-order: stroke; stroke-linejoin: round; }
.wm .cjk { font: italic 700 34px "Noto Sans CJK SC", sans-serif; }

.files { display: flex; height: 22px; align-items: flex-end; padding-left: 12px; background: #383838; border-bottom: 2px solid #5e5e5e; }
.ftab { height: 18px; display: flex; align-items: center; gap: 4px; background: linear-gradient(#6a6a6a, #545454); clip-path: polygon(0 100%, 4px 85%, 10px 10%, 14px 0, calc(100% - 14px) 0, calc(100% - 9px) 10%, calc(100% - 4px) 85%, 100% 100%); }
.start { width: 112px; padding-left: 14px; color: #a0a0a0; background: #545454; }
.doc { padding: 0; width: 232px; justify-content: center; margin-left: -6px; color: #f2f2f2; font: 11px/14px Roboto, sans-serif; background: linear-gradient(#888, #5e5e5e); }
.doc svg:last-child { margin-left: 4px; }
.plus { width: 28px; justify-content: center; height: 16px; }

.canvas { position: relative; flex: 1 0 538px; background: #8b8b8b; border-right: 7px solid #000; overflow: hidden; }
.sheet { position: absolute; left: 0; top: 0; }
.sheet text { font-family: "Liberation Sans", Arial, sans-serif; }
.t3 { font-size: 3px; } .t4 { font-size: 4px; } .t5 { font-size: 5px; }
.bd { font-weight: 700; }
.mid { text-anchor: middle; }
.green { fill: #2cc83c; } .navy { fill: #1c1c90; } .m { fill: #d428c8; font-weight: 700; } .cy { fill: #38cfe2; } .redt { fill: #d04040; font-weight: 700; }
.hd { font-size: 4px; fill: #3cc84c; font-weight: 700; }
.hl { fill: #b82cb8; font-weight: 400; }
.two { font-size: 9px; fill: #cc5cc8; }
.lvl { font-size: 5px; fill: #35c4d6; text-decoration: underline; font-weight: 700; }
.bub { font-size: 6px; fill: #18a8c0; text-anchor: middle; }
.stamp { font-size: 5px; fill: #111; font-weight: 700; }
.tb { fill: none; stroke: #5fd6d8; }
.grid { fill: none; stroke: #3c3c94; stroke-width: 1.3; stroke-dasharray: 8 2 2 2; }
.mag path { fill: none; stroke: #cc50c0; }
.navbar { position: absolute; right: 3px; top: 4px; width: 28px; height: 108px; background: #9a9a9a; border: 1px solid #747474; border-radius: 2px; }
.cmd { position: absolute; left: 264px; right: 0; bottom: 0; height: 22px; display: flex; align-items: center; background: rgba(255, 255, 255, .7); }
.cmdl { width: 42px; height: 22px; background: #555; margin-right: 2px; }
.cmd input { flex: 1; height: 20px; border: 0; background: none; outline: 0; padding: 0; color: #222; font: 10px/20px "Liberation Mono", monospace; }

.dialog { position: absolute; left: 409px; top: 45px; width: 462px; display: flex; flex-direction: column; background: #f0f0f0; border: 1px solid #4d97c4; box-shadow: 1px 2px 8px rgba(0, 0, 0, .5); color: #222; font: 10px/12px "Noto Sans CJK SC", sans-serif; }
.mono { font: 9px/12px "Liberation Mono", monospace; white-space: pre; }
.dtitle { height: 25px; display: flex; align-items: center; gap: 4px; padding: 0 9px 0 6px; background: #fff; }
.dtitle button { margin-left: auto; }
.dbody { display: grid; grid-template-columns: 149px 1fr 68px; column-gap: 10px; padding: 7px 9px 0 10px; }
.dbody p { margin: 0; height: 16px; line-height: 16px; white-space: nowrap; }
.left { display: flex; flex-direction: column; }
.left ul { list-style: none; margin: 1px 0 0; padding: 1px 0 0 15px; height: 152px; background: #fff; border: 1px solid #828790; }
.left li { height: 12px; line-height: 12px; display: flex; }
.left li .mono { padding: 0 1px; line-height: 12px; }
.sel { background: #0b74cf; color: #fff; }
.ll { height: 18px; line-height: 18px; }
.sel-wrap { position: relative; }
.sel-wrap select { display: block; width: 100%; height: 16px; appearance: none; border: 1px solid #adadad; background: #e3e3e3; padding: 0 2px; line-height: 12px; }
.sel-wrap svg { position: absolute; right: 3px; top: 6px; }
.chk { display: flex; align-items: center; gap: 3px; height: 27px; color: #8c8c8c; white-space: nowrap; }
.chk input { appearance: none; width: 10px; height: 10px; border: 1px solid #ccc; background: #f8f8f8; display: grid; place-items: center; }
.chk input::after { content: ""; width: 5px; height: 2px; border: solid #aaa; border-width: 0 0 1px 1px; transform: rotate(-45deg); }
.midc { padding: 14px 0 0 6px; }
.preview { height: 150px; margin-top: 3px; background: #fff; border: 1px solid #777; border-right-color: #eee; border-bottom-color: #eee; border-top-width: 2px; }
.preview svg { width: 100%; height: 100%; }
.dimt { font: 300 10px "Lato", sans-serif; fill: #a63cae; text-anchor: middle; }
fieldset { margin: 2px 0 0; height: 52px; border: 1px solid #dcdcdc; padding: 1px 8px; min-width: 0; }
legend { padding: 0 2px; margin-left: -4px; }
.right { display: flex; flex-direction: column; gap: 7px; padding-top: 33px; }
.right button, .dfoot button { height: 17px; line-height: 12px; border: 1px solid #adadad; background: #e1e1e1; }
.right .hot { background: #e2f1fb; border-color: #2f7fb8; }
.dfoot { display: flex; justify-content: flex-end; gap: 10px; padding: 2px 8px 11px; }
.dfoot button { width: 66px; }
.dfoot .def { border: 2px solid #2a7cc0; line-height: 11px; }
.cursor { position: absolute; left: 410px; top: 124px; }

.status { height: 24px; display: flex; align-items: flex-start; padding-left: 10px; background: #383838; }
.ltab { width: 41px; height: 15px; margin-top: 1px; font-size: 10px; line-height: 14px; color: #aaa; background: #555; clip-path: polygon(0 0, 100% 0, calc(100% - 7px) 100%, 7px 100%); }
.ltab.act { width: 62px; background: #808080; color: #fff; font-weight: 700; font-size: 10px; }
.ltab.add { width: 22px; display: grid; place-items: center; }
.sright { margin-left: auto; width: 405px; display: flex; gap: 2px; height: 22px; }
.sright button { width: 25px; background: #505050; border-left: 1px solid #5e5e5e; color: #f0f0f0; }
.brand { position: absolute; right: 0; bottom: 0; width: 355px; height: 178px; background: #fff; }
.b1 { font: italic 900 39px "Noto Sans CJK SC", sans-serif; fill: #0a0a0a; }
.b2 { font: italic 500 25px "Noto Sans", sans-serif; fill: #111; }
</style>
